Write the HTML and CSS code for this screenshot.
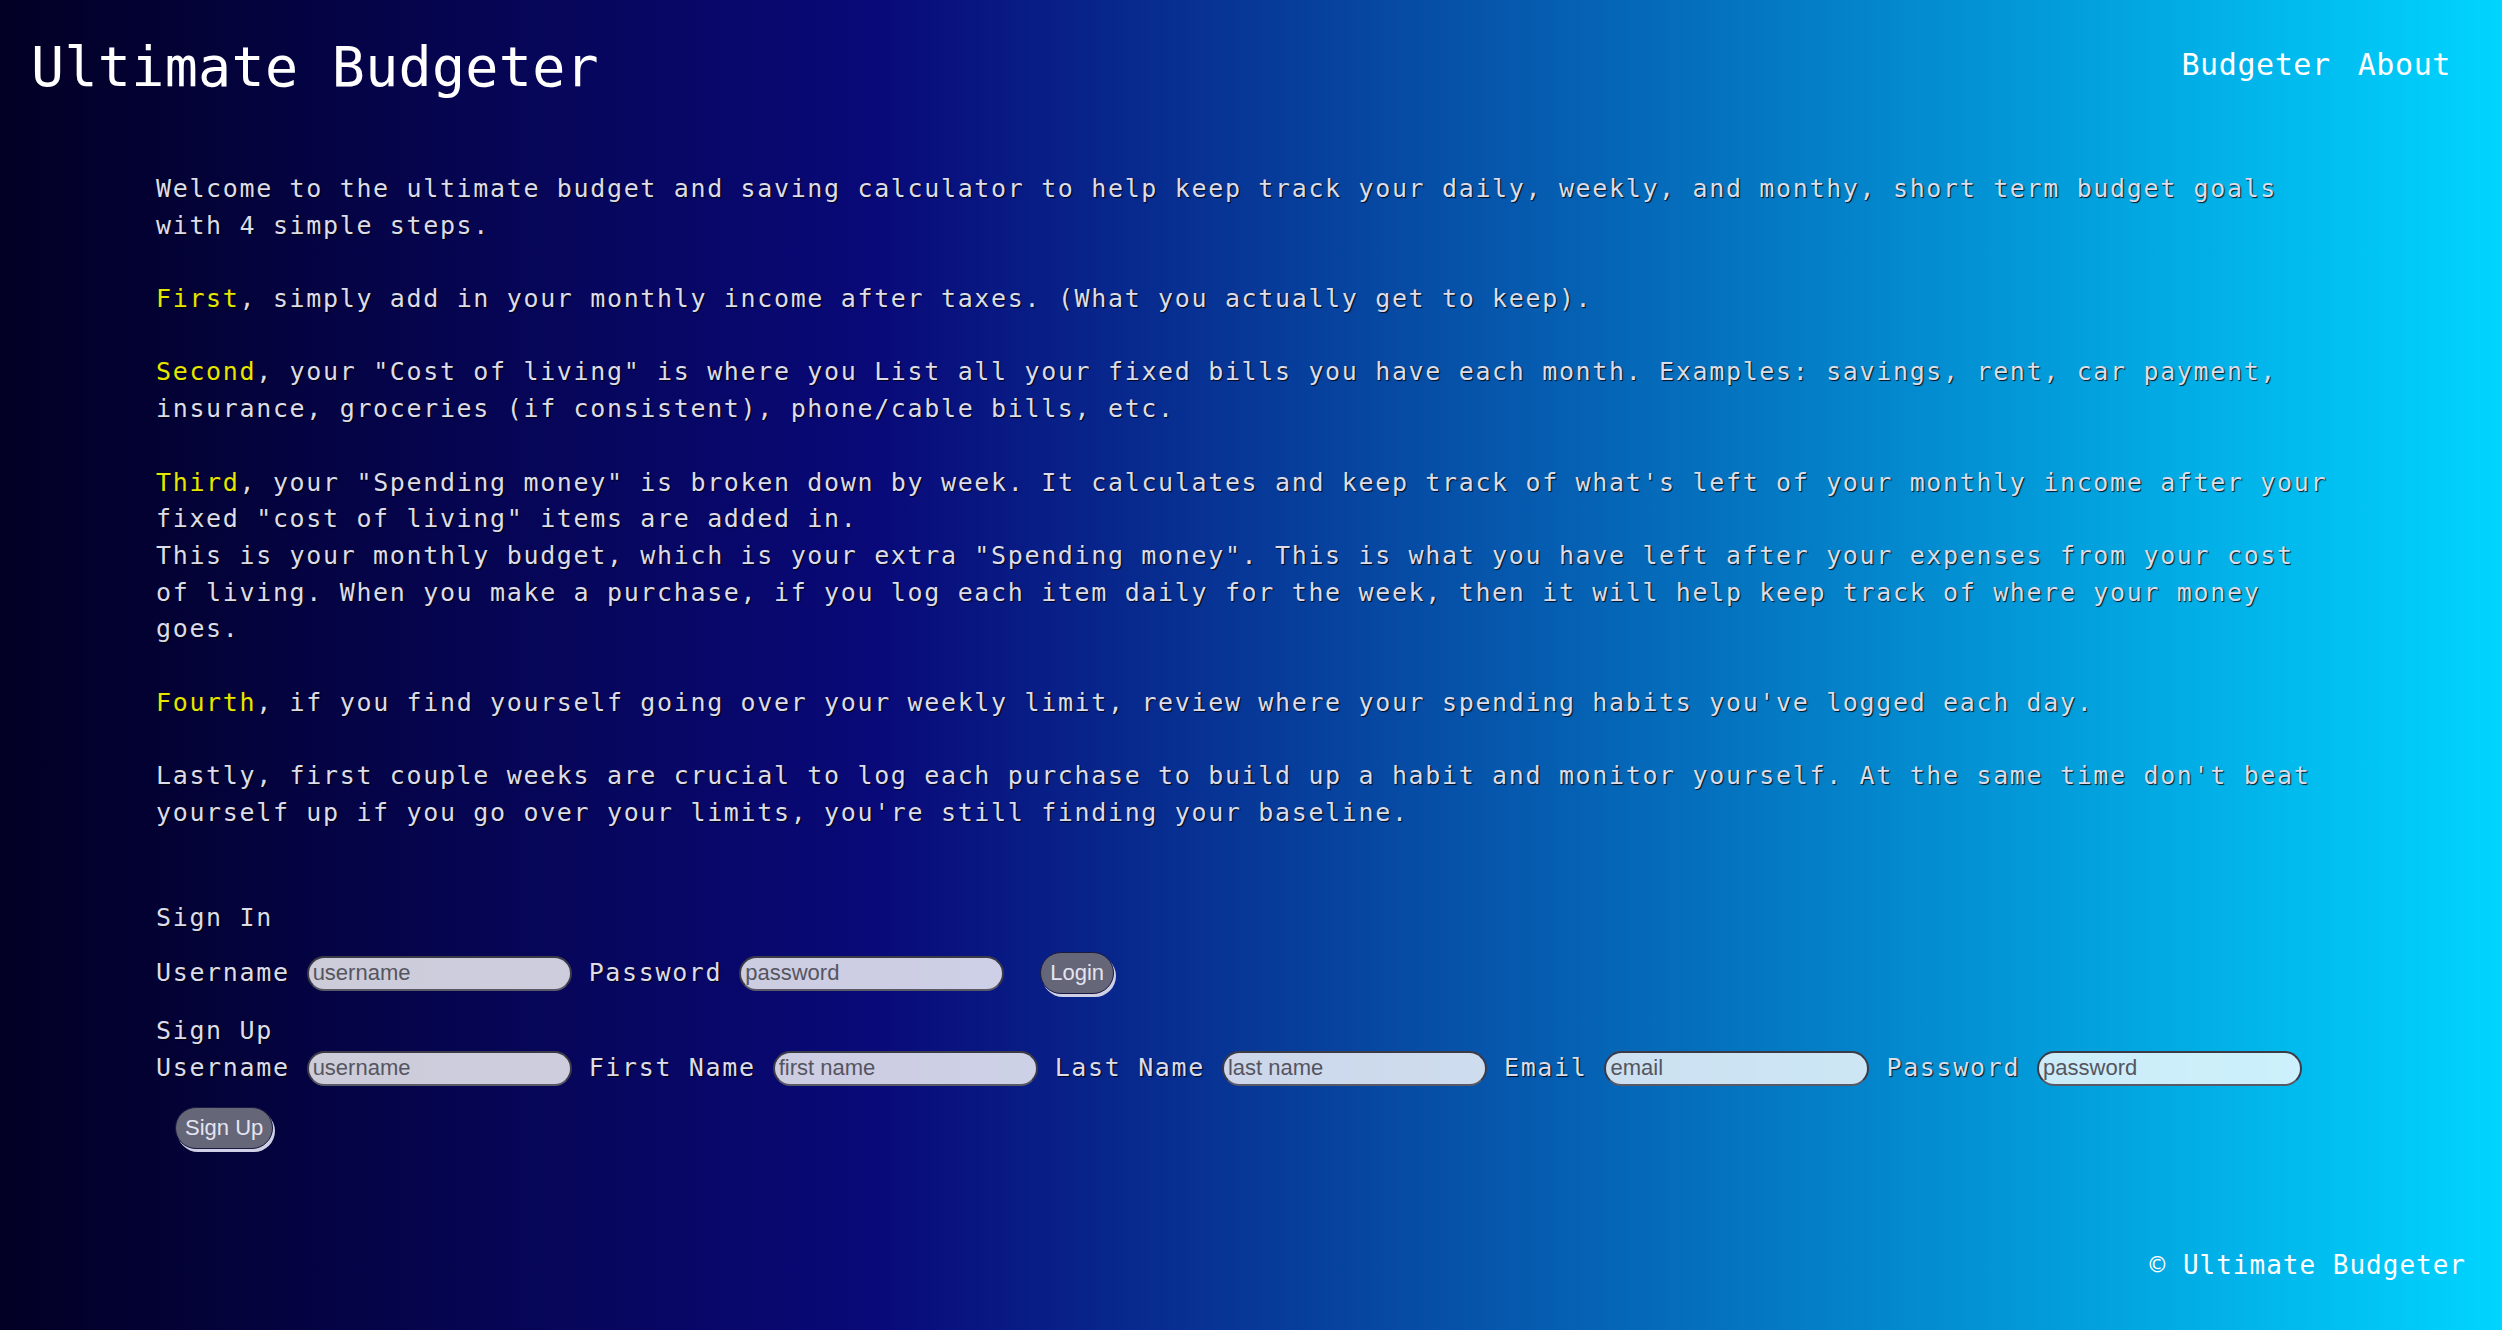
FILE: index.html
```html
<!DOCTYPE html>
<html lang="en">
<head>
<meta charset="utf-8">
<title>Ultimate Budgeter</title>
<link rel="stylesheet" href="styles.css">
</head>
<body>
<header class="site-header">
  <h1 class="brand">Ultimate Budgeter</h1>
  <nav class="nav">
    <a class="nav-link" href="#">Budgeter</a>
    <a class="nav-link" href="#">About</a>
  </nav>
</header>
<main class="content">
  <section class="intro">
    <p>Welcome to the ultimate budget and saving calculator to help keep track your daily, weekly, and monthy, short term budget goals with 4 simple steps.</p>
    <p><span class="hl">First</span>, simply add in your monthly income after taxes. (What you actually get to keep).</p>
    <p><span class="hl">Second</span>, your "Cost of living" is where you List all your fixed bills you have each month. Examples: savings, rent, car payment, insurance, groceries (if consistent), phone/cable bills, etc.</p>
    <p><span class="hl">Third</span>, your "Spending money" is broken down by week. It calculates and keep track of what's left of your monthly income after your fixed "cost of living" items are added in.<br>This is your monthly budget, which is your extra "Spending money". This is what you have left after your expenses from your cost of living. When you make a purchase, if you log each item daily for the week, then it will help keep track of where your money goes.</p>
    <p><span class="hl">Fourth</span>, if you find yourself going over your weekly limit, review where your spending habits you've logged each day.</p>
    <p>Lastly, first couple weeks are crucial to log each purchase to build up a habit and monitor yourself. At the same time don't beat yourself up if you go over your limits, you're still finding your baseline.</p>
  </section>
  <section class="auth">
    <h2 class="auth-title">Sign In</h2>
    <form class="auth-row signin">
      <label class="field-label" for="si-user">Username</label>
      <input class="field" id="si-user" type="text" placeholder="username">
      <label class="field-label" for="si-pass">Password</label>
      <input class="field" id="si-pass" type="password" placeholder="password">
      <button class="btn" type="button">Login</button>
    </form>
    <h2 class="auth-title">Sign Up</h2>
    <form class="auth-row signup">
      <label class="field-label" for="su-user">Username</label>
      <input class="field" id="su-user" type="text" placeholder="username">
      <label class="field-label" for="su-first">First Name</label>
      <input class="field" id="su-first" type="text" placeholder="first name">
      <label class="field-label" for="su-last">Last Name</label>
      <input class="field" id="su-last" type="text" placeholder="last name">
      <label class="field-label" for="su-email">Email</label>
      <input class="field" id="su-email" type="text" placeholder="email">
      <label class="field-label" for="su-pass">Password</label>
      <input class="field" id="su-pass" type="password" placeholder="password">
      <button class="btn" type="button">Sign Up</button>
    </form>
  </section>
</main>
<footer class="site-footer">© Ultimate Budgeter</footer>
</body>
</html>
```
FILE: styles.css
```css
html, body {
  margin: 0;
  padding: 0;
}
body {
  min-height: 100vh;
  display: flex;
  flex-direction: column;
  background: linear-gradient(90deg, #020024 0%, #090979 35%, #00d4ff 100%);
  font-family: "DejaVu Sans Mono", "Liberation Mono", monospace;
  color: #dcdcea;
  text-shadow: 1px 1px 1px rgba(0, 0, 0, 0.85);
}
.site-header {
  display: flex;
  justify-content: space-between;
  align-items: flex-start;
  padding: 34px 51px 0 31px;
}
.brand {
  margin: 0;
  font-size: 55px;
  line-height: 66px;
  letter-spacing: 0.3px;
  font-weight: normal;
  color: #ffffff;
  text-shadow: none;
}
.nav {
  display: flex;
  gap: 27px;
}
.nav-link {
  font-size: 30px;
  line-height: 62px;
  letter-spacing: 0.6px;
  color: #ffffff;
  text-decoration: none;
  text-shadow: none;
}
.content {
  flex: 1;
  margin-top: 71px;
  padding-left: 156px;
}
.intro {
  width: 2180px;
  font-size: 25px;
  letter-spacing: 1.65px;
  line-height: 36.7px;
}
.intro p {
  margin: 0 0 36.7px;
}
.hl {
  color: #e6e600;
}
.auth {
  margin-top: 68px;
  width: 2180px;
  font-size: 25px;
  letter-spacing: 1.65px;
  line-height: 36.7px;
}
.auth-title {
  margin: 0;
  font-size: 25px;
  font-weight: normal;
  line-height: 36.7px;
}
.auth-row {
  display: flex;
  flex-wrap: wrap;
  align-items: center;
  column-gap: 17px;
  row-gap: 20px;
  margin: 0;
}
.signin {
  margin-top: 16px;
  margin-bottom: 19px;
}
.field-label {
  line-height: 36.7px;
}
.field {
  box-sizing: border-box;
  width: 265px;
  height: 35px;
  margin: 0;
  padding: 0 4px;
  border: 2px solid #3b3b48;
  border-bottom-color: #5a5a66;
  border-radius: 18px;
  background: rgba(255, 255, 255, 0.8);
  font-family: "Liberation Sans", Arial, sans-serif;
  font-size: 22px;
  letter-spacing: 0;
  color: #333;
  outline: none;
}
.field::placeholder {
  color: #555560;
}
.btn {
  box-sizing: border-box;
  height: 42px;
  margin-left: 19px;
  padding: 0 9px;
  border: 1px solid #1a1a40;
  border-radius: 21px;
  background: #656678;
  box-shadow: 2px 3px 0 #cfd0e6;
  font-family: "Liberation Sans", Arial, sans-serif;
  font-size: 22px;
  letter-spacing: 0;
  color: #e4e4f0;
  text-shadow: none;
}
.site-footer {
  align-self: flex-end;
  padding: 0 36px 47px 0;
  font-size: 26px;
  line-height: 36px;
  letter-spacing: 1px;
  color: #ffffff;
  text-shadow: none;
}
```
